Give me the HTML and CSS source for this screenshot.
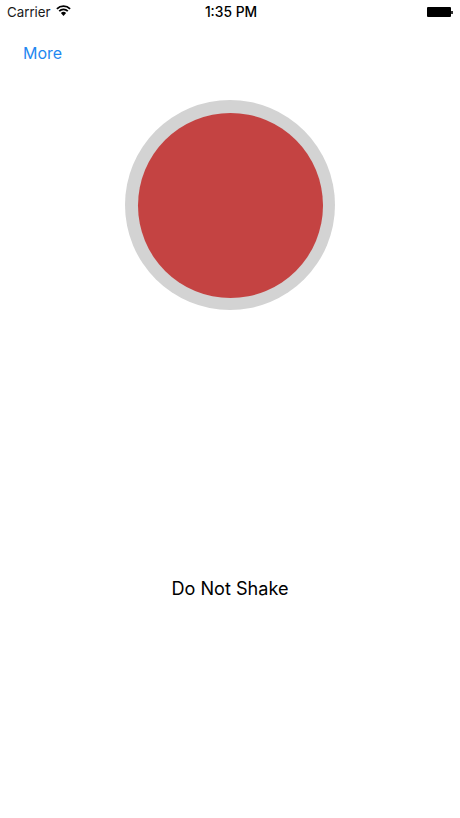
FILE: index.html
```html
<!DOCTYPE html>
<html lang="en">
<head>
    <meta charset="UTF-8">
    <meta name="viewport" content="width=device-width, initial-scale=1.0">
    <title>Do Not Shake</title>
    <link rel="stylesheet" href="styles.css">
</head>
<body>
    <div class="screen">
        <div class="status-bar">
            <div class="status-left">
                <span class="carrier">Carrier</span>
                <svg class="wifi" width="15" height="11" viewBox="0 0 15 11">
                    <path d="M7.5 10.9 4.9 8a3.6 3.6 0 0 1 5.2 0z" fill="#000"/>
                    <path d="M.9 3.8a9.4 9.4 0 0 1 13.2 0" fill="none" stroke="#000" stroke-width="1.8"/>
                    <path d="M3.2 6.2a6.1 6.1 0 0 1 8.6 0" fill="none" stroke="#000" stroke-width="1.8"/>
                </svg>
            </div>
            <span class="time">1:35 PM</span>
            <div class="battery">
                <span class="battery-body"></span>
                <span class="battery-tip"></span>
            </div>
        </div>
        <a class="more" href="#">More</a>
        <div class="button-ring">
            <div class="button-face"></div>
        </div>
        <p class="label">Do Not Shake</p>
    </div>
</body>
</html>
```

FILE: styles.css
```css
* {
    box-sizing: border-box;
    margin: 0;
    padding: 0;
}
body {
    background: white;
    font-family: Inter, 'Liberation Sans', sans-serif;
    color: black;
}
.screen {
    width: 460px;
    height: 818px;
    overflow: hidden;
}
.status-bar {
    display: grid;
    grid-template-columns: 1fr auto 1fr;
    align-items: center;
    height: 24px;
    padding: 0 7px;
}
.status-left {
    display: flex;
    align-items: center;
    gap: 5px;
}
.carrier {
    font-size: 13.3px;
    color: #1a1a1a;
}
.wifi {
    margin-top: -4px;
}
.time {
    margin-left: 2px;
    font-size: 13.8px;
    font-weight: 500;
}
.battery {
    display: flex;
    align-items: center;
    justify-content: flex-end;
}
.battery-body {
    width: 24px;
    height: 10px;
    background: black;
    border-radius: 1px;
}
.battery-tip {
    width: 2px;
    height: 3px;
    background: #333;
}
.more {
    display: block;
    width: max-content;
    margin: 19px 0 0 23px;
    font-size: 16px;
    line-height: 20px;
    color: #1f88f0;
    text-decoration: none;
}
.button-ring {
    display: flex;
    align-items: center;
    justify-content: center;
    width: 210px;
    height: 210px;
    margin: 37px auto 0;
    background: #d3d3d3;
    border-radius: 50%;
}
.button-face {
    width: 185px;
    height: 185px;
    background: #c44342;
    border-radius: 50%;
}
.label {
    margin-top: 266px;
    font-size: 18.1px;
    line-height: 24px;
    text-align: center;
}
```
